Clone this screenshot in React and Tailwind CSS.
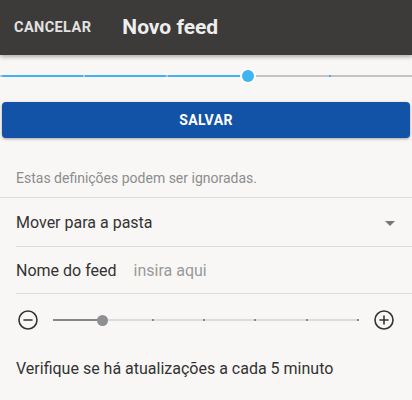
import { useState } from 'react'

const font = { fontFamily: 'Roboto, "Liberation Sans", sans-serif' }

function TopStepper({ step = 3, steps = 5 }) {
  const parts = []
  for (let i = 0; i < steps; i++) {
    const done = i < step
    if (i > 0) {
      if (i === step) {
        parts.push(
          <span key={`t${i}`} className="relative z-10 -mx-[8px] h-[16px] w-[16px] shrink-0 rounded-full bg-white flex items-center justify-center">
            <span className="h-[12px] w-[12px] rounded-full bg-[#3db5f2]" />
          </span>
        )
      } else {
        parts.push(<span key={`t${i}`} className={`h-[2px] w-[2px] shrink-0 ${done ? 'bg-[#c4c4c4]' : 'bg-[#3db5f2]'}`} />)
      }
    } else {
      parts.push(<span key="t0" className="h-[2px] w-[2px] shrink-0 bg-[#c4c4c4]" />)
    }
    parts.push(<span key={`s${i}`} className={`h-[2px] flex-1 ${done ? 'bg-[#3db5f2]' : 'bg-[#c4c4c4]'}`} />)
  }
  return <div className="h-[42px] w-full flex items-center">{parts}</div>
}

function IntervalSlider({ value, steps = 6 }) {
  const parts = []
  for (let i = 0; i < steps; i++) {
    if (i > 0) {
      parts.push(
        i === value ? (
          <span key={`t${i}`} className="relative z-10 -mx-[5.5px] h-[11px] w-[11px] shrink-0 rounded-full bg-[#8e8f95]" />
        ) : i > value ? (
          <span key={`t${i}`} className="h-[2px] w-[2px] shrink-0 bg-[#888]" />
        ) : null
      )
    }
    parts.push(<span key={`s${i}`} className={`h-[2px] flex-1 ${i < value ? 'bg-[#84858a]' : 'bg-[#dcdcdc]'}`} />)
  }
  parts.push(<span key="end" className="h-[2px] w-[2px] shrink-0 bg-[#888]" />)
  return <div className="flex-1 h-[20px] mx-[14px] flex items-center">{parts}</div>
}

const CircleIcon = ({ plus }) => (
  <svg className="w-[22px] h-[22px] shrink-0" viewBox="0 0 22 22" fill="none" stroke="#333" strokeWidth={1.6}>
    <circle cx="11" cy="11" r="9" />
    <path strokeLinecap="round" d="M7 11h8" />
    {plus && <path strokeLinecap="round" d="M11 7v8" />}
  </svg>
)

export default function App() {
  const [name, setName] = useState('')
  const [interval] = useState(1)

  return (
    <div className="w-[412px] h-[400px] overflow-hidden bg-[#f8f7f5]" style={font}>
      {/* Toolbar */}
      <div className="h-[55px] bg-[#3c3b39] flex items-center shadow-[0_2px_4px_rgba(0,0,0,0.3)] relative z-20">
        <button className="ml-[14px] text-[14.5px] font-bold tracking-[0.4px] text-[#e2e2e2] uppercase">Cancelar</button>
        <h1 className="ml-[31px] text-[21px] font-bold text-[#eeeeee]">Novo feed</h1>
      </div>

      <TopStepper />

      {/* Save button */}
      <div className="px-[2px] mt-[5px]">
        <button className="w-full h-[36px] rounded-[4px] bg-[#1253a8] text-white text-[14px] font-bold tracking-[0.4px] shadow-[0_1px_3px_rgba(0,0,0,0.35)]">
          SALVAR
        </button>
      </div>

      <p className="mt-[30px] px-[16px] text-[14px] leading-[20px] text-[#8d8d8d] pb-[9px] border-b border-[#dcdcdc]">
        Estas definições podem ser ignoradas.
      </p>

      <div className="ml-[16px]">
        <div className="h-[49px] pt-[2px] flex items-center justify-between border-b border-[#dcdcdc]">
          <span className="text-[16px] text-[#333]">Mover para a pasta</span>
          <svg className="w-[10px] h-[5px] mr-[17px]" viewBox="0 0 10 5">
            <path d="M0 0h10L5 5z" fill="#777" />
          </svg>
        </div>
        <div className="h-[47px] pt-[2px] flex items-center border-b border-[#dcdcdc]">
          <span className="text-[16px] text-[#333]">Nome do feed</span>
          <input
            value={name}
            onChange={(e) => setName(e.target.value)}
            placeholder="insira aqui"
            className="ml-[17px] flex-1 bg-transparent outline-none text-[16px] text-[#333] placeholder-[#9a9a9a]"
          />
        </div>
      </div>

      <div className="h-[50px] pt-[2px] flex items-center px-[17px]">
        <CircleIcon />
        <IntervalSlider value={interval} />
        <CircleIcon plus />
      </div>

      <p className="mt-[13px] px-[16px] text-[16px] text-[#333]">Verifique se há atualizações a cada 5 minuto</p>
    </div>
  )
}
